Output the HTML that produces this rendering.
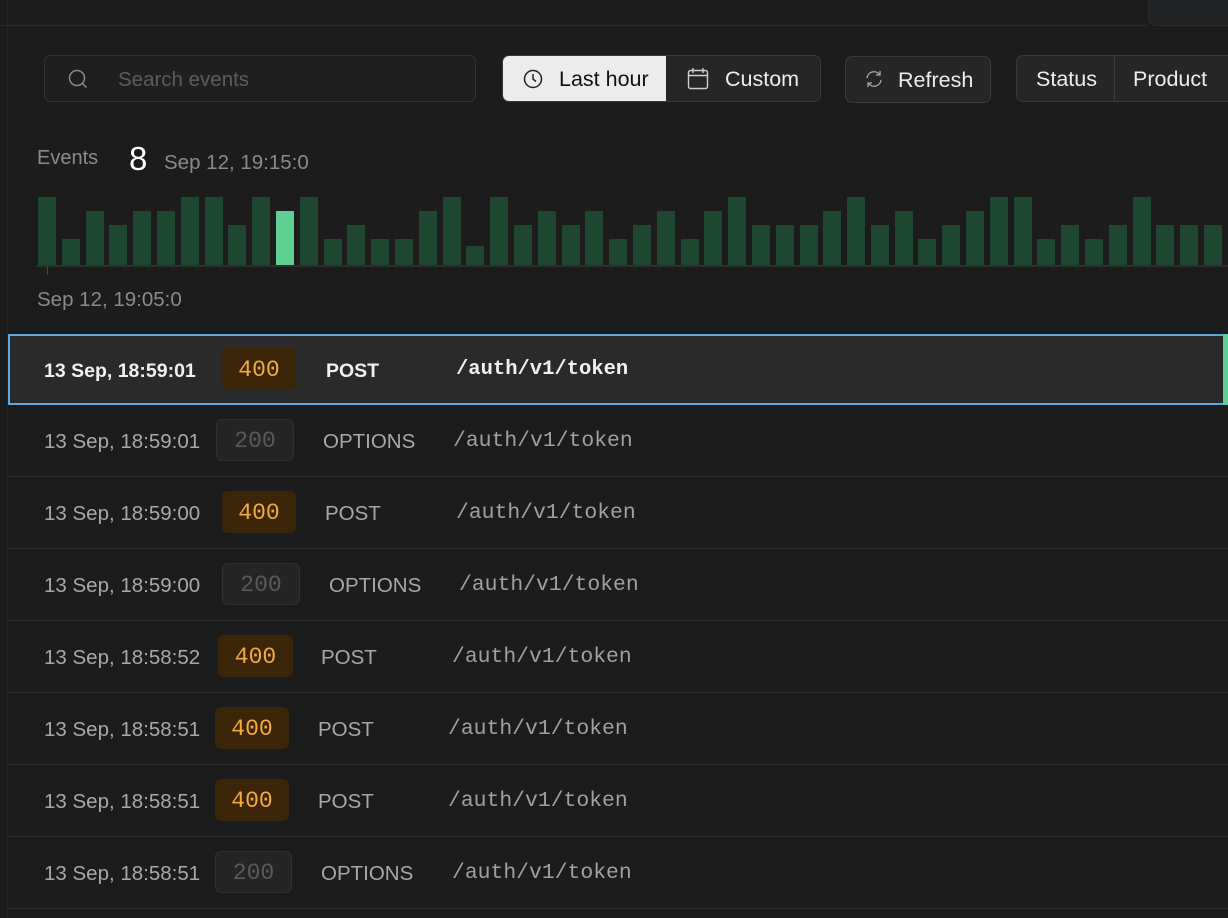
<!DOCTYPE html>
<html><head><meta charset="utf-8"><style>
*{box-sizing:border-box;margin:0;padding:0}
body{width:1228px;height:918px;background:#1c1c1c;font-family:"Liberation Sans",sans-serif;overflow:hidden;position:relative;color:#ededed}
.abs{position:absolute}
.topline{left:0;top:25px;width:1148px;height:1px;background:#2a2a2a}
.vline{left:7px;top:0;width:1px;height:918px;background:#262626}
.tr{left:1148px;top:0;width:80px;height:26px;background:#222325;border-bottom-left-radius:8px;border:1px solid #2c2c2e;border-top:none;border-right:none}
.search{left:44px;top:55px;width:432px;height:47px;border:1px solid #333;border-radius:7px;background:#1f1f1f}
.search span{position:absolute;left:73px;top:12px;font-size:20.5px;color:#5c5c5c}
.btn{height:47px;border:1px solid #393939;border-radius:7px;background:#262626;font-size:21.5px;color:#ededed}
.bars{left:38px;top:196px;height:70px;display:flex;align-items:flex-end}
.bars div{width:18px;margin-right:5.8px;background:#1d4731;flex:none}
.bars div.hl{background:#5fcf92}
.axis{left:36px;top:265px;width:1192px;height:2px;background:#2e2e2e}
.row{left:8px;width:1220px;height:72px;border-bottom:1px solid #2c2c2c}
.row .t{position:absolute;left:36px;top:25px;font-size:20.5px;color:#a8a8a8}
.row .b{position:absolute;top:14px;height:42px;border-radius:6px;font-family:"Liberation Mono",monospace;font-size:23px;text-align:center;line-height:44px}
.b4{background:#3a2508;color:#f3a93c}
.b2{background:#252525;color:#5a5a5a;border:1px solid #303030;line-height:42px!important}
.row .m{position:absolute;top:25px;font-size:20.5px;color:#a8a8a8}
.row .p{position:absolute;top:24px;font-family:"Liberation Mono",monospace;font-size:21.4px;color:#a0a0a0}
.sel{background:#2a2a2a;border:2px solid #5ea7e0;border-right:none}
.sel .t,.sel .m{color:#f0f0f0;font-weight:bold;font-size:19.5px}
.sel .p{color:#f0f0f0;font-weight:bold;font-size:20.5px}
</style></head><body>
<div class="abs vline"></div>
<div class="abs topline"></div>
<div class="abs tr"></div>

<div class="abs search">
<svg class="abs" style="left:22px;top:12px" width="22" height="22" viewBox="0 0 22 22" fill="none" stroke="#8a8a8a" stroke-width="1.5"><circle cx="10" cy="10" r="7.5"/><path d="M15.5 15.5l4 4"/></svg>
<span>Search events</span></div>

<div class="abs btn" style="left:502px;top:55px;width:319px;overflow:hidden">
<div class="abs" style="left:0;top:0;width:163px;height:45px;background:#ececec;color:#111"><svg class="abs" style="left:20px;top:13px" width="20" height="20" viewBox="0 0 20 20" fill="none" stroke="#222" stroke-width="1.5"><circle cx="10" cy="10" r="8.5"/><path d="M10 5v5l3 2.5"/></svg><span class="abs" style="left:56px;top:11px">Last hour</span></div>
<svg class="abs" style="left:184px;top:11px" width="22" height="23" viewBox="0 0 22 23" fill="none" stroke="#cfcfcf" stroke-width="1.4"><rect x="1.5" y="3.5" width="19" height="18" rx="2"/><path d="M1.5 8.5h19M6 1v5M16 1v5"/></svg>
<span class="abs" style="left:222px;top:11px">Custom</span></div>

<div class="abs btn" style="left:845px;top:56px;width:146px">
<svg class="abs" style="left:18px;top:12px" width="20" height="20" viewBox="0 0 20 20" fill="none" stroke="#aaa" stroke-width="1.3"><path d="M3 9a7 7 0 0 1 12.5-3.5M17 11a7 7 0 0 1-12.5 3.5"/><path d="M16 2v4h-4M4 18v-4h4"/></svg>
<span class="abs" style="left:52px;top:11px">Refresh</span></div>

<div class="abs btn" style="left:1016px;top:55px;width:230px">
<span class="abs" style="left:19px;top:11px">Status</span>
<div class="abs" style="left:97px;top:0;width:1px;height:45px;background:#3a3a3a"></div>
<span class="abs" style="left:116px;top:11px">Product</span></div>

<div class="abs" style="left:37px;top:147px;font-size:20px;color:#8a8a8a">Events</div>
<div class="abs" style="left:129px;top:140px;font-size:33px;color:#fff">8</div>
<div class="abs" style="left:164px;top:151px;font-size:20.5px;color:#8a8a8a">Sep 12, 19:15:0</div>

<div class="abs bars">
<div style="height:69px"></div><div style="height:27px"></div><div style="height:55px"></div><div style="height:41px"></div><div style="height:55px"></div><div style="height:55px"></div><div style="height:69px"></div><div style="height:69px"></div><div style="height:41px"></div><div style="height:69px"></div>
<div class="hl" style="height:55px"></div><div style="height:69px"></div><div style="height:27px"></div><div style="height:41px"></div><div style="height:27px"></div><div style="height:27px"></div><div style="height:55px"></div><div style="height:69px"></div><div style="height:20px"></div><div style="height:69px"></div>
<div style="height:41px"></div><div style="height:55px"></div><div style="height:41px"></div><div style="height:55px"></div><div style="height:27px"></div><div style="height:41px"></div><div style="height:55px"></div><div style="height:27px"></div><div style="height:55px"></div><div style="height:69px"></div>
<div style="height:41px"></div><div style="height:41px"></div><div style="height:41px"></div><div style="height:55px"></div><div style="height:69px"></div><div style="height:41px"></div><div style="height:55px"></div><div style="height:27px"></div><div style="height:41px"></div><div style="height:55px"></div>
<div style="height:69px"></div><div style="height:69px"></div><div style="height:27px"></div><div style="height:41px"></div><div style="height:27px"></div><div style="height:41px"></div><div style="height:69px"></div><div style="height:41px"></div><div style="height:41px"></div><div style="height:41px"></div>
</div>
<div class="abs axis"></div>
<div class="abs" style="left:47px;top:266px;width:1px;height:9px;background:#444"></div>
<div class="abs" style="left:37px;top:288px;font-size:20.5px;color:#8a8a8a">Sep 12, 19:05:0</div>

<div class="abs row sel" style="top:334px;height:71px"><div class="t" style="left:34px;top:24px">13 Sep, 18:59:01</div><div class="b b4" style="left:212px;top:12px;width:74px">400</div><div class="m" style="left:316px;top:24px">POST</div><div class="p" style="left:446px;top:22px">/auth/v1/token</div><div class="abs" style="right:0;top:-2px;width:5px;height:71px;background:#5fcf92"></div></div>
<div class="abs row" style="top:405px"><div class="t">13 Sep, 18:59:01</div><div class="b b2" style="left:208px;width:78px">200</div><div class="m" style="left:315px">OPTIONS</div><div class="p" style="left:445px">/auth/v1/token</div></div>
<div class="abs row" style="top:477px"><div class="t">13 Sep, 18:59:00</div><div class="b b4" style="left:214px;width:74px">400</div><div class="m" style="left:317px">POST</div><div class="p" style="left:448px">/auth/v1/token</div></div>
<div class="abs row" style="top:549px"><div class="t">13 Sep, 18:59:00</div><div class="b b2" style="left:214px;width:78px">200</div><div class="m" style="left:321px">OPTIONS</div><div class="p" style="left:451px">/auth/v1/token</div></div>
<div class="abs row" style="top:621px"><div class="t">13 Sep, 18:58:52</div><div class="b b4" style="left:210px;width:75px">400</div><div class="m" style="left:313px">POST</div><div class="p" style="left:444px">/auth/v1/token</div></div>
<div class="abs row" style="top:693px"><div class="t">13 Sep, 18:58:51</div><div class="b b4" style="left:207px;width:74px">400</div><div class="m" style="left:310px">POST</div><div class="p" style="left:440px">/auth/v1/token</div></div>
<div class="abs row" style="top:765px"><div class="t">13 Sep, 18:58:51</div><div class="b b4" style="left:207px;width:74px">400</div><div class="m" style="left:310px">POST</div><div class="p" style="left:440px">/auth/v1/token</div></div>
<div class="abs row" style="top:837px"><div class="t">13 Sep, 18:58:51</div><div class="b b2" style="left:207px;width:77px">200</div><div class="m" style="left:313px">OPTIONS</div><div class="p" style="left:444px">/auth/v1/token</div></div>
</body></html>
